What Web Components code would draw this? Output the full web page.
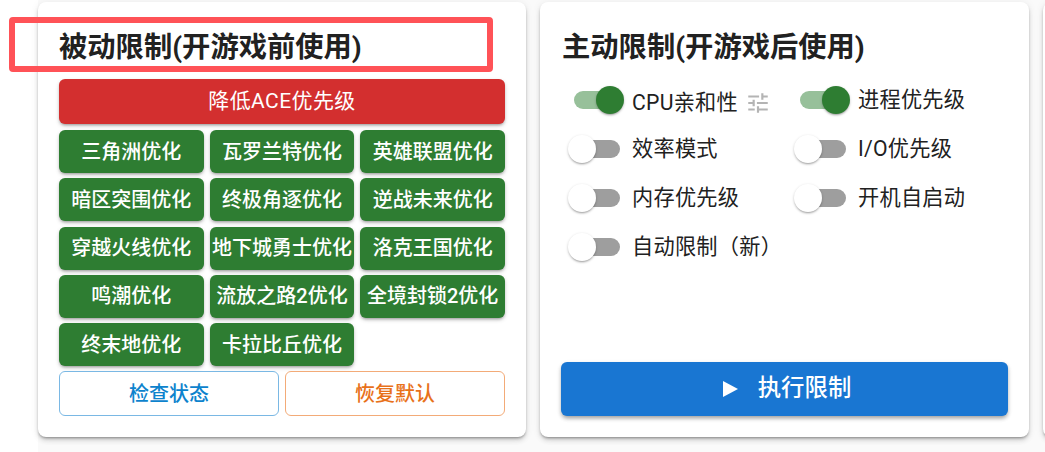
<!DOCTYPE html>
<html lang="zh-CN"><head><meta charset="utf-8"><title>限制</title>
<style>
html,body{margin:0;height:100%;background:#fff;overflow:hidden}
body{font-family:Roboto,"Noto Sans CJK SC",sans-serif;color:#212121}
x-page{--g:#2e7d32}
</style></head><body>
<x-page>
  <x-card title-text="被动限制(开游戏前使用)" tight>
    <x-btn kind="red" wide>降低ACE优先级</x-btn>
    <x-grid>
      <x-btn>三角洲优化</x-btn><x-btn>瓦罗兰特优化</x-btn><x-btn>英雄联盟优化</x-btn>
      <x-btn>暗区突围优化</x-btn><x-btn>终极角逐优化</x-btn><x-btn>逆战未来优化</x-btn>
      <x-btn>穿越火线优化</x-btn><x-btn>地下城勇士优化</x-btn><x-btn>洛克王国优化</x-btn>
      <x-btn>鸣潮优化</x-btn><x-btn>流放之路2优化</x-btn><x-btn>全境封锁2优化</x-btn>
      <x-btn>终末地优化</x-btn><x-btn>卡拉比丘优化</x-btn>
    </x-grid>
    <x-duo>
      <x-btn kind="blue">检查状态</x-btn><x-btn kind="orange">恢复默认</x-btn>
    </x-duo>
    <x-note></x-note>
  </x-card>
  <x-card title-text="主动限制(开游戏后使用)">
    <x-toggles>
      <x-switch on tune>CPU亲和性</x-switch><x-switch on>进程优先级</x-switch>
      <x-switch>效率模式</x-switch><x-switch>I/O优先级</x-switch>
      <x-switch>内存优先级</x-switch><x-switch>开机自启动</x-switch>
      <x-switch>自动限制（新）</x-switch>
    </x-toggles>
    <x-run>执行限制</x-run>
  </x-card>
  <x-card></x-card>
</x-page>
<script>
function def(name,css,html,extra){
  customElements.define(name,class extends HTMLElement{
    constructor(){super();this.attachShadow({mode:'open'}).innerHTML='<style>'+css+'</style>'+html;}
    connectedCallback(){if(extra)extra(this);}
  });
}
def('x-page',`:host{display:flex;gap:14px;height:452px;box-sizing:border-box;padding:2px 0 15px 38px;background:linear-gradient(#fff,#fff) left/38px 100% no-repeat,#fafafa;overflow:hidden}`,`<slot></slot>`);
def('x-card',`:host{display:flex;flex:none;width:489px;flex-direction:column;box-sizing:border-box;position:relative;padding:28px 21px 21px 21px;background:#fff;border-radius:8px;box-shadow:0 2px 3px -1px rgba(0,0,0,.4),0 4px 5px rgba(0,0,0,.1),0 1px 8px rgba(0,0,0,.08)}
:host([tight]){width:488px}
h2{margin:0;font:700 28.3px/36px Roboto,"Noto Sans CJK SC",sans-serif;color:#212121;white-space:nowrap;height:36px}
:host([tight]) h2{margin-bottom:13px}
:host(:not([tight])) h2{margin-left:1px;margin-bottom:16px}`,`<h2></h2><slot></slot>`,el=>{
  const t=el.getAttribute('title-text');const h=el.shadowRoot.querySelector('h2');
  if(t)h.textContent=t;else h.remove();
});
def('x-btn',`:host{display:flex;align-items:center;justify-content:center;box-sizing:border-box;height:43px;border-radius:6px;background:var(--g,#2e7d32);color:#fff;font:500 20px/1 Roboto,"Noto Sans CJK SC",sans-serif;white-space:nowrap;box-shadow:0 2px 3px -1px rgba(0,0,0,.3),0 2px 4px rgba(0,0,0,.16)}
:host([kind=red]){background:#d32f2f;height:45px;margin-bottom:6px;font-weight:400;font-size:21px;letter-spacing:.4px}
:host([kind=blue]),:host([kind=orange]){background:#fff;box-shadow:none;height:45px;border:1px solid #7ab8e4;color:#0d83cd;}
:host([kind=orange]){border-color:#f3ab78;color:#e8711a}`,`<slot></slot>`);
def('x-grid',`:host{display:grid;grid-template-columns:repeat(3,1fr);column-gap:6px;row-gap:5.25px;margin-bottom:5px}`,`<slot></slot>`);
def('x-duo',`:host{display:grid;grid-template-columns:1fr 1fr;gap:6px}`,`<slot></slot>`);
def('x-note',`:host{position:absolute;left:-29px;top:15px;width:484px;height:55px;box-sizing:border-box;border:6.5px solid #ff5257;border-radius:4px}`,``);
def('x-toggles',`:host{display:grid;grid-template-columns:226px 1fr;grid-auto-rows:49px;padding-left:7px;flex:1}`,`<slot></slot>`);
def('x-switch',`:host{display:flex;align-items:center;font:400 21.2px/1 Roboto,"Noto Sans CJK SC",sans-serif;color:#212121;white-space:nowrap;letter-spacing:.25px;height:36px}
.sw{position:relative;width:46px;height:18px;margin:0 12px 0 6px;flex:none;border-radius:9px;background:#9e9e9e}
.th{position:absolute;left:-6px;top:-5px;width:28px;height:28px;border-radius:50%;background:#fff;box-shadow:0 2px 2px -1px rgba(0,0,0,.25),0 1px 3px rgba(0,0,0,.2)}
:host([on]) .sw{background:#97c09a}
:host([on]) .th{left:22px;background:#2e7d32}
.lb{display:block}
:host([tune]) .lb{padding-top:5px}
svg{width:26px;height:26px;margin:6px 0 0 7px;fill:#b4b4b4;display:none}
:host([tune]) svg{display:block}`,`<span class="sw"><span class="th"></span></span><span class="lb"><slot></slot></span><svg viewBox="0 0 24 24"><path d="M3 17v2h6v-2H3zM3 5v2h10V5H3zm10 16v-2h8v-2h-8v-2h-2v6h2zM7 9v2H3v2h4v2h2V9H7zm14 4v-2H11v2h10zm-6-4h2V7h4V5h-4V3h-2v6z"/></svg>`);
def('x-run',`:host{display:flex;align-items:center;justify-content:center;gap:20px;height:54px;padding-left:5px;border-radius:6px;background:#1976d2;color:#fff;font:500 23.4px/1 Roboto,"Noto Sans CJK SC",sans-serif;box-shadow:0 3px 4px -1px rgba(0,0,0,.3),0 2px 5px rgba(0,0,0,.14)}
i{width:0;height:0;border-left:15px solid #fff;border-top:8.5px solid transparent;border-bottom:8.5px solid transparent}`,`<i></i><slot></slot>`);
</script></body></html>
